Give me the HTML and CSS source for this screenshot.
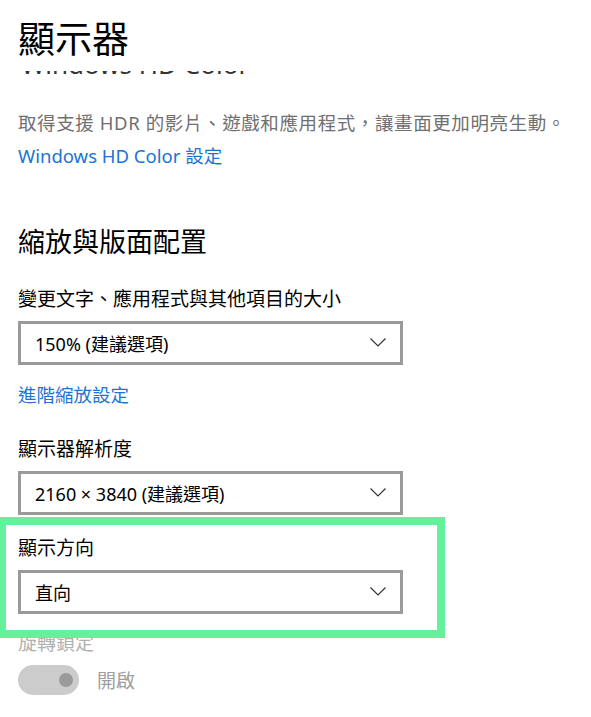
FILE: index.html
```html
<!DOCTYPE html>
<html lang="zh-Hant">
<head>
<title>顯示器</title>
<meta charset="utf-8">
<meta name="viewport" content="width=device-width, initial-scale=1">
<link rel="stylesheet" href="styles.css">
</head>
<body>

<header>
  <h1>顯示器</h1>
</header>

<!-- scrolled section, only the bottom of its heading peeks out -->
<div class="peek"><h2>Windows HD Color</h2></div>

<section class="hdr">
  <p class="desc">取得支援 HDR 的影片、遊戲和應用程式，讓畫面更加明亮生動。</p>
  <a class="link" href="#">Windows HD Color 設定</a>
</section>

<section class="scale">
  <h2>縮放與版面配置</h2>

  <div class="field first">
    <label>變更文字、應用程式與其他項目的大小</label>
    <div class="select">
      <span>150% (建議選項)</span>
      <svg class="chev" width="16" height="9" viewBox="0 0 16 9"><path d="M0.5 0.5 L8 8 L15.5 0.5" fill="none" stroke="#333" stroke-width="1.2"/></svg>
    </div>
  </div>
  <a class="link link_small" href="#">進階縮放設定</a>

  <div class="field">
    <label>顯示器解析度</label>
    <div class="select">
      <span>2160 × 3840 (建議選項)</span>
      <svg class="chev" width="16" height="9" viewBox="0 0 16 9"><path d="M0.5 0.5 L8 8 L15.5 0.5" fill="none" stroke="#333" stroke-width="1.2"/></svg>
    </div>
  </div>

  <div class="field orientation">
    <label>顯示方向</label>
    <div class="select">
      <span>直向</span>
      <svg class="chev" width="16" height="9" viewBox="0 0 16 9"><path d="M0.5 0.5 L8 8 L15.5 0.5" fill="none" stroke="#333" stroke-width="1.2"/></svg>
    </div>
    <div class="highlight"></div>
  </div>

  <div class="field disabled">
    <label>旋轉鎖定</label>
    <div class="toggle_row">
      <span class="toggle"><span class="knob"></span></span>
      <span class="toggle_text">開啟</span>
    </div>
  </div>
</section>

</body>
</html>
```

FILE: styles.css
```css
body {
  margin: 0;
  padding: 0 0 0 18px;
  font-family: "Noto Sans", "Noto Sans CJK TC", sans-serif;
  color: #000;
  background: #fff;
  overflow: hidden;
}
h1, h2 {
  font-weight: 400;
  margin: 0;
}
header {
  height: 68px;
}
header h1 {
  font-family: "Noto Sans CJK TC", sans-serif;
  font-size: 37px;
  line-height: 37px;
  padding-top: 19px;
}
.peek {
  height: 3px;
  margin-top: 3px;
  padding-left: 3px;
  overflow: hidden;
  contain: paint;
}
.peek h2 {
  font-size: 26px;
  line-height: 26px;
  transform: translateY(-20px);
  color: #333;
}
.hdr {
  padding-top: 36px;
}
.desc {
  margin: 0;
  font-size: 18.5px;
  line-height: 26px;
  color: #707070;
  letter-spacing: 0.6px;
  white-space: nowrap;
}
.link {
  display: inline-block;
  color: #1b74d4;
  text-decoration: none;
  font-size: 18.5px;
  line-height: 26px;
  margin-top: 7px;
}
.scale {
  padding-top: 56px;
}
.scale h2 {
  font-family: "Noto Sans CJK TC", sans-serif;
  font-size: 27px;
  line-height: 32px;
}
.field {
  margin-top: 26px;
}
.field.first {
  margin-top: 30px;
}
.field label {
  display: block;
  font-size: 19px;
  line-height: 24px;
}
.select {
  box-sizing: border-box;
  width: 385px;
  height: 44px;
  margin-top: 10px;
  border: 3px solid #9a9a9a;
  display: flex;
  align-items: center;
  justify-content: space-between;
  padding: 0 14px 0 14px;
  font-size: 18px;
}
.chev {
  margin-bottom: 2px;
}
.link_small {
  margin-top: 17px;
}
.scale .link_small + .field {
  margin-top: 29px;
}
.orientation {
  position: relative;
  margin-top: 21px;
}
.highlight {
  position: absolute;
  left: -20px;
  top: -19px;
  width: 447px;
  height: 121px;
  box-sizing: border-box;
  border: 8px solid #64f19c;
  pointer-events: none;
}
.disabled {
  margin-top: 17px;
}
.disabled label {
  color: #b0b0b0;
}
.toggle_row {
  display: flex;
  align-items: center;
  gap: 18px;
  margin-top: 10px;
}
.toggle {
  position: relative;
  width: 61px;
  height: 30px;
  border-radius: 15px;
  background: #cccccc;
}
.knob {
  position: absolute;
  right: 6px;
  top: 8px;
  width: 14px;
  height: 14px;
  border-radius: 50%;
  background: #9a9a9a;
}
.toggle_text {
  font-size: 19px;
  color: #a0a0a0;
}
```
